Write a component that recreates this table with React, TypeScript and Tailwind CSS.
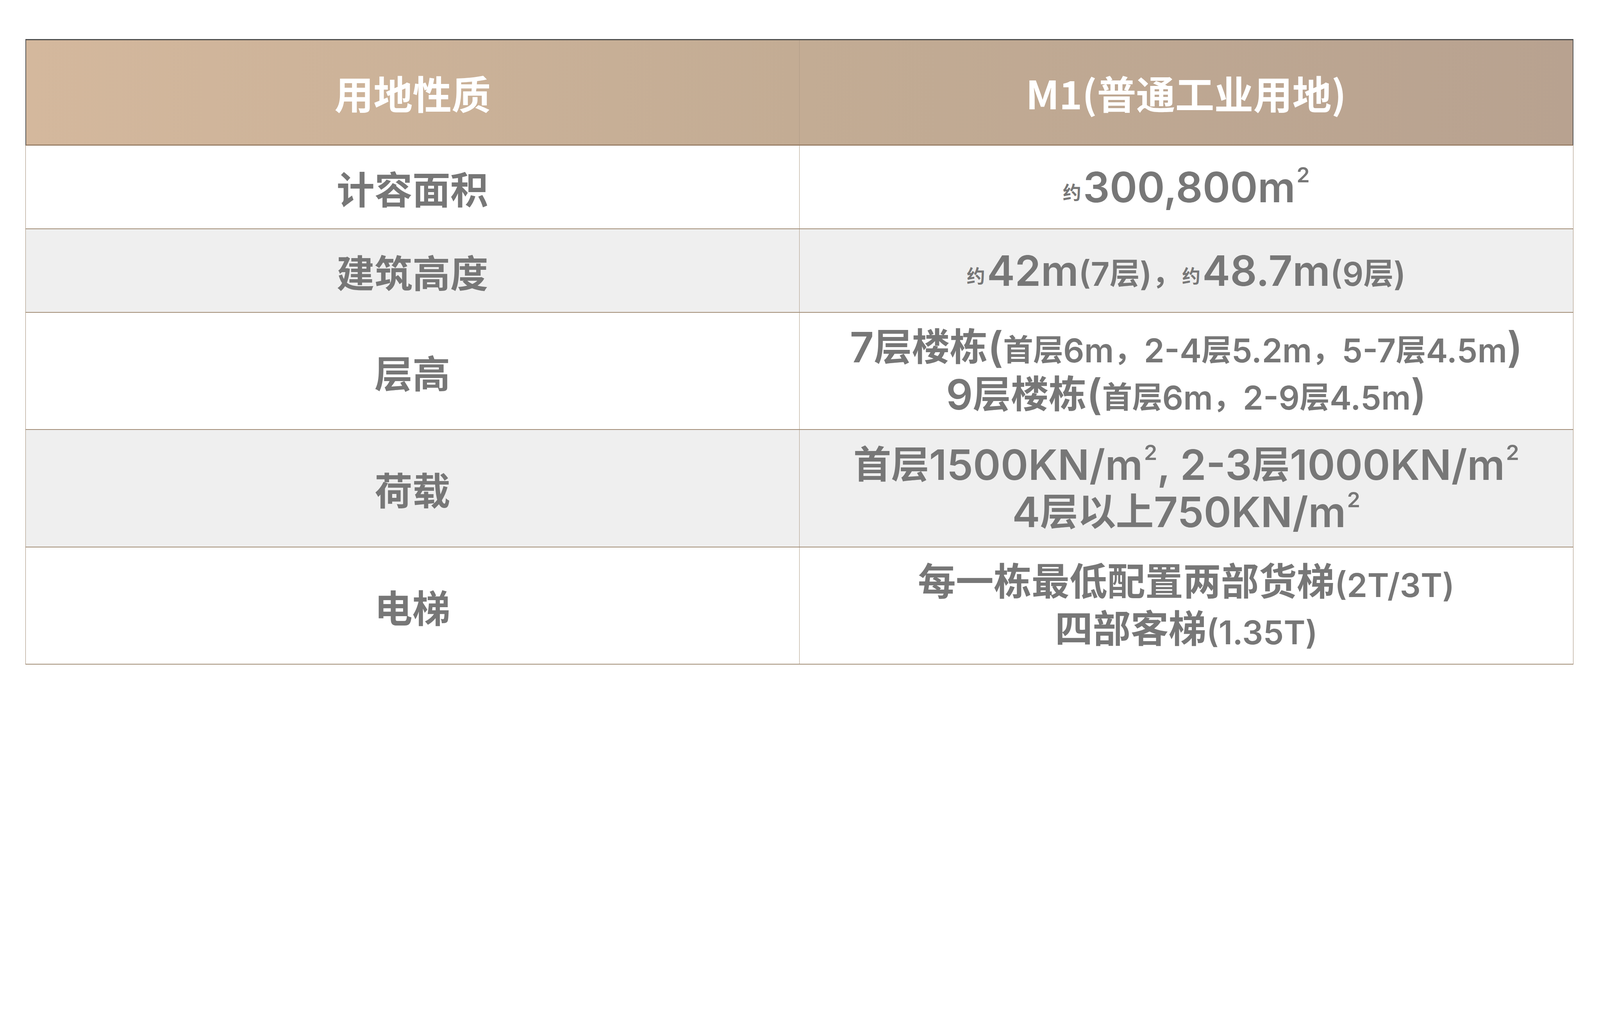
import React from "react";

type P = { children: React.ReactNode };

const C = ({ children }: P) => (
  <span className="text-[97px] leading-none font-bold font-['Noto_Sans_CJK_SC',sans-serif] align-[5px]">{children}</span>
);
const L = ({ children }: P) => (
  <span className="text-[107px] leading-none font-semibold font-['Inter','Noto_Sans_CJK_SC',sans-serif]">{children}</span>
);
const SC = ({ children }: P) => (
  <span className="text-[77px] leading-none font-bold font-['Noto_Sans_CJK_SC',sans-serif] align-[4px]">{children}</span>
);
const SL = ({ children }: P) => (
  <span className="text-[84px] leading-none font-semibold font-['Inter','Noto_Sans_CJK_SC',sans-serif]">{children}</span>
);
const Yue = () => (
  <span className="text-[47px] leading-none font-bold font-['Noto_Sans_CJK_SC',sans-serif] align-[8px] mr-[5px]">约</span>
);
const Sup = () => (
  <span className="text-[54px] leading-none font-semibold font-['Inter',sans-serif] align-[51px] ml-[3px]">2</span>
);

const Line = ({ children }: P) => (
  <div className="whitespace-nowrap text-center leading-[121px] text-[107px] font-['Inter',sans-serif]">{children}</div>
);

const Row = ({
  h,
  bg,
  label,
  children,
}: {
  h: string;
  bg: string;
  label: string;
  children: React.ReactNode;
}) => (
  <div className={`grid grid-cols-2 border-x-[1.5px] border-x-[#a08b74] border-b-2 border-b-[#a08b74] ${h} ${bg}`}>
    <div className="flex items-center justify-center border-r-[1.5px] border-r-[#ad9984] text-[97px] font-bold leading-none text-[#777777] font-['Noto_Sans_CJK_SC',sans-serif]">
      {label}
    </div>
    <div className="flex flex-col items-center justify-center text-[#777777]">{children}</div>
  </div>
);

export default function App() {
  return (
    <div className="w-full h-[1805px] bg-white pt-[100px] pl-[65px]">
      <div className="w-[3963px]">
        <div className="grid grid-cols-2 h-[273px] border-t-[3px] border-t-[#4d4d4d] border-x-2 border-x-[#555555] border-b-[3px] border-b-[#9a8068] bg-linear-to-r from-[#d4b89d] via-[#c3ac94] to-[#b8a290]">
          <div className="flex items-center justify-center border-r-[1.5px] border-r-[#ae9a85] text-[100px] font-bold leading-none text-white font-['Noto_Sans_CJK_SC',sans-serif]">
            用地性质
          </div>
          <div className="flex items-center justify-center text-[100px] font-bold leading-none text-white font-['Noto_Sans_CJK_SC',sans-serif]">
            M1(普通工业用地)
          </div>
        </div>

        <Row h="h-[214px]" bg="bg-white" label="计容面积">
          <Line>
            <Yue />
            <L>300,800m</L>
            <Sup />
          </Line>
        </Row>

        <Row h="h-[214px]" bg="bg-[#efefef]" label="建筑高度">
          <Line>
            <Yue />
            <L>42m</L>
            <SL>(7</SL>
            <SC>层</SC>
            <SL>)</SL>
            <SC>，</SC>
            <Yue />
            <L>48.7m</L>
            <SL>(9</SL>
            <SC>层</SC>
            <SL>)</SL>
          </Line>
        </Row>

        <Row h="h-[300px]" bg="bg-white" label="层高">
          <Line>
            <L>7</L>
            <C>层楼栋</C>
            <L>(</L>
            <SC>首层</SC>
            <SL>6m</SL>
            <SC>，</SC>
            <SL>2-4</SL>
            <SC>层</SC>
            <SL>5.2m</SL>
            <SC>，</SC>
            <SL>5-7</SL>
            <SC>层</SC>
            <SL>4.5m</SL>
            <L>)</L>
          </Line>
          <Line>
            <L>9</L>
            <C>层楼栋</C>
            <L>(</L>
            <SC>首层</SC>
            <SL>6m</SL>
            <SC>，</SC>
            <SL>2-9</SL>
            <SC>层</SC>
            <SL>4.5m</SL>
            <L>)</L>
          </Line>
        </Row>

        <Row h="h-[301px]" bg="bg-[#efefef]" label="荷载">
          <Line>
            <C>首层</C>
            <L>1500KN/m</L>
            <Sup />
            <L>, 2-3</L>
            <C>层</C>
            <L>1000KN/m</L>
            <Sup />
          </Line>
          <Line>
            <L>4</L>
            <C>层以上</C>
            <L>750KN/m</L>
            <Sup />
          </Line>
        </Row>

        <Row h="h-[300px]" bg="bg-white" label="电梯">
          <Line>
            <C>每一栋最低配置两部货梯</C>
            <SL>(2T/3T)</SL>
          </Line>
          <Line>
            <C>四部客梯</C>
            <SL>(1.35T)</SL>
          </Line>
        </Row>
      </div>
    </div>
  );
}
